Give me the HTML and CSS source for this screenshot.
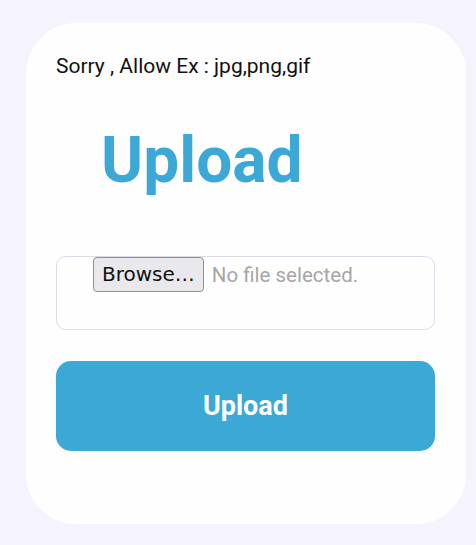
FILE: index.html
```html
<!DOCTYPE html>
<html>
<head>
<meta charset="utf-8">
<link rel="stylesheet" href="styles.css">
</head>
<body>
<div class="card">
  <p class="note">Sorry , Allow Ex : jpg,png,gif</p>
  <h1 class="title">Upload</h1>
  <label class="file-box">
    <input type="file" class="file-input">
    <span class="browse">Browse…</span>
    <span class="file-name">No file selected.</span>
  </label>
  <button class="submit">Upload</button>
</div>
</body>
</html>
```
FILE: styles.css
```css
html, body {
  margin: 0;
  padding: 0;
}
body {
  background: #f5f4fe;
  font-family: Roboto, "Noto Sans", sans-serif;
  padding: 23px 10px 21px 26px;
}
.card {
  width: 440px;
  height: 501px;
  box-sizing: border-box;
  background: #fefefe;
  border-radius: 50px;
  padding: 30px 31px 0 30px;
}
.note {
  margin: 0;
  font-size: 21px;
  line-height: 26px;
  color: #111;
}
.title {
  margin: 42px 0 0 45px;
  font-size: 64px;
  line-height: 80px;
  font-weight: 700;
  color: #3ca8d5;
}
.file-box {
  margin-top: 55px;
  display: flex;
  align-items: flex-start;
  gap: 8px;
  height: 74px;
  box-sizing: border-box;
  border: 1px solid #dcdbe6;
  border-radius: 10px;
  padding: 0 0 0 36px;
}
.file-input {
  display: none;
}
.browse {
  font-family: "DejaVu Sans", sans-serif;
  font-size: 20px;
  line-height: 33px;
  padding: 0 8px;
  background: #e9e9ed;
  border: 1px solid #8f8f9d;
  border-radius: 4px;
  color: #111;
}
.file-name {
  font-size: 20.5px;
  line-height: 37px;
  color: #a6a6a6;
}
.submit {
  margin-top: 31px;
  display: block;
  width: 379px;
  height: 90px;
  border: none;
  border-radius: 15px;
  background: #3ca8d5;
  color: #fff;
  font-family: Roboto, sans-serif;
  font-size: 27px;
  font-weight: 700;
}
```
